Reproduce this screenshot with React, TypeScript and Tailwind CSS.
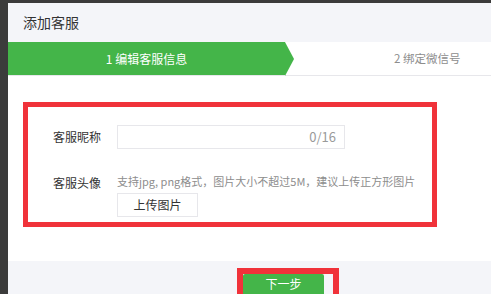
import React from "react";

const font = { fontFamily: '"Noto Sans CJK SC", "Noto Sans", sans-serif' };

export default function App() {
  return (
    <div className="w-[504px] h-[294px] bg-white flex overflow-hidden" style={font}>
      <div className="w-[8px] h-full bg-[#3b3b3b]" />
      <div className="w-[483px] h-full flex flex-col">
        <div className="h-[3px] bg-[#3b3b3b]" />
        {/* header */}
        <div className="h-[39px] bg-[#f4f5f9] flex items-center pl-[15px] text-[14px] text-[#333]">
          添加客服
        </div>
        {/* steps */}
        <div className="h-[34px] flex items-stretch border-b border-[#e7e7eb] bg-white">
          <div className="relative w-[277px] bg-[#44b549] flex items-center justify-center text-[12px] text-white">
            1 编辑客服信息
            <div className="absolute right-[-9px] top-0 w-0 h-0 border-y-[17px] border-y-transparent border-l-[9px] border-l-[#44b549]" />
          </div>
          <div className="flex-1 flex items-center pl-[109px] text-[11.5px] text-[#8d8d8d]">2 绑定微信号</div>
        </div>
        {/* body */}
        <div className="flex-1 pt-[26px] pl-[15px]">
          <div className="w-[414px] h-[125px] border-[5px] border-[#f0323a] pl-[25px] pt-[18px]">
            <div className="flex items-center">
              <div className="w-[64px] text-[12px] text-[#333]">客服昵称</div>
              <div className="w-[228px] h-[24px] border border-[#e7e7eb] flex items-center justify-end pr-[8px] text-[13px] text-[#9a9a9a]">
                0/16
              </div>
            </div>
            <div className="flex mt-[22px]">
              <div className="w-[64px] text-[12px] text-[#333] leading-[20px] pt-[2px]">客服头像</div>
              <div className="flex flex-col">
                <div className="text-[11px] text-[#8d8d8d] leading-[20px] whitespace-nowrap">
                  支持jpg, png格式，图片大小不超过5M，建议上传正方形图片
                </div>
                <button className="mt-[2px] w-[81px] h-[24px] border border-[#e7e7eb] bg-white text-[12px] text-[#333]">
                  上传图片
                </button>
              </div>
            </div>
          </div>
        </div>
        {/* footer */}
        <div className="h-[33px] bg-[#f4f5f9] pt-[7px] pl-[229px]">
          <div className="w-[102px] h-[26px] border-[6px] border-b-0 border-[#f0323a] bg-[#f4f5f9]">
            <div className="w-[81px] h-full bg-[#44b549] rounded-t-[2px] flex items-center justify-center text-[12px] text-white">
              下一步
            </div>
          </div>
        </div>
      </div>
      <div className="flex-1 bg-white" />
    </div>
  );
}
